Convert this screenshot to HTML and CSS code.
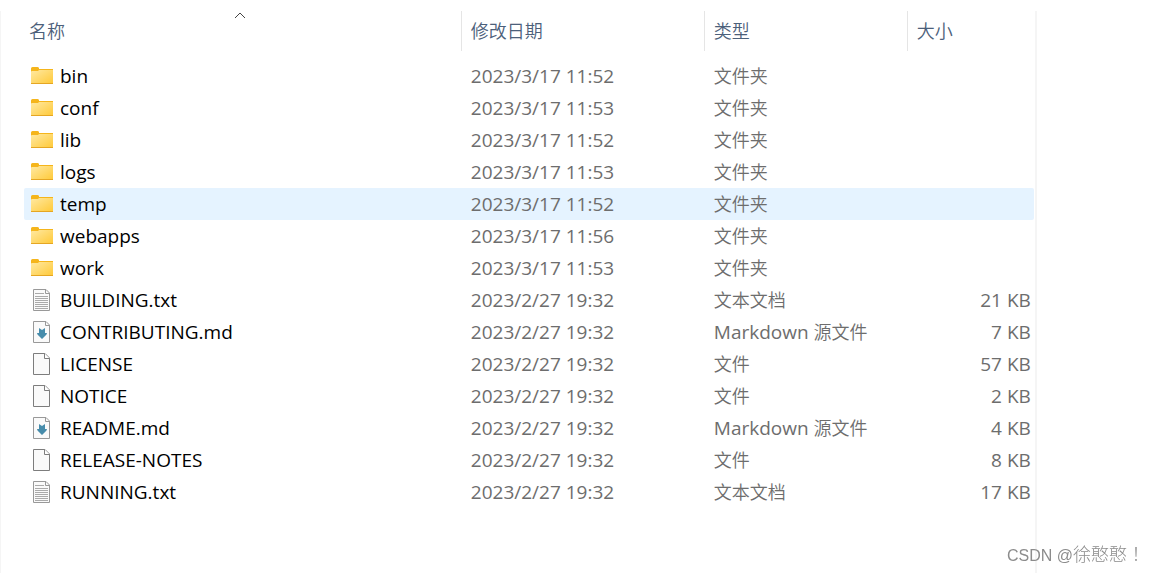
FILE: index.html
```html
<!DOCTYPE html>
<html lang="zh-CN">
<head>
  <meta charset="UTF-8" />
  <meta name="viewport" content="width=device-width, initial-scale=1.0" />
  <title>tomcat</title>
  <link rel="stylesheet" href="styles.css">
</head>
<body>
  <svg class="sprite" aria-hidden="true">
    <defs>
      <linearGradient id="amarillo" x1="0" y1="0" x2="1" y2="1">
        <stop offset="0" stop-color="#ffe9a2" />
        <stop offset="1" stop-color="#ffc937" />
      </linearGradient>
    </defs>
    <symbol id="folder" viewBox="0 0 24 24">
      <path d="M1 4.500Q1 3 2.500 3H7.500Q8.500 3 9 4V5H23V9H1z" fill="#f5b51b" />
      <path d="M1 8Q1 7 2 7H8L9 6H23V20H1z" fill="url(#amarillo)" />
      <path d="M1 19H23V20H1z" fill="#e5a623" />
    </symbol>
    <symbol id="file" viewBox="0 0 24 24">
      <path d="M3.500 1.500H15L19.500 6V22.500H3.500z" fill="#fafafa" stroke="#7d7d7d" />
      <path d="M14.500 1.500V6.500H19.500" fill="#fff" stroke="#7d7d7d" />
    </symbol>
    <symbol id="text" viewBox="0 0 24 24">
      <path d="M3.500 1.500H16L19.500 5V22.500H3.500z" fill="#fafafa" stroke="#999" />
      <path d="M15.500 1.500V5.500H19.500" fill="none" stroke="#999" />
      <path d="M5 5.500H14M5 8.500H18M5 10.500H18M5 12.500H18M5 14.500H18M5 16.500H18M5 18.500H18M5 20.500H18" stroke="#aaa" />
    </symbol>
    <symbol id="markdown" viewBox="0 0 24 24">
      <path d="M3.500 1.500H16L19.500 5V22.500H3.500z" fill="#fafafa" stroke="#999" />
      <path d="M15.500 1.500V5.500H19.500" fill="none" stroke="#999" />
      <path d="M9 8L12 10L15 8V13H17L16.500 14.500L12 19L7.500 14.500L7 13H9z" fill="#478cab" />
    </symbol>
  </svg>

  <main class="panel">
    <table class="files">
      <colgroup>
        <col>
        <col class="col-date">
        <col class="col-type">
        <col class="col-size">
      </colgroup>
      <thead>
        <tr>
          <th aria-sort="ascending">名称
            <svg class="sort" viewBox="0 0 12 7" aria-hidden="true"><path d="M1 6L6 1L11 6" fill="none" stroke="#444" /></svg>
          </th>
          <th>修改日期</th>
          <th>类型</th>
          <th>大小</th>
        </tr>
      </thead>
      <tbody>
        <tr>
          <td><a class="name" href="#bin"><svg class="icon"><use href="#folder" /></svg>bin</a></td>
          <td>2023/3/17 11:52</td><td class="type">文件夹</td><td></td>
        </tr>
        <tr>
          <td><a class="name" href="#conf"><svg class="icon"><use href="#folder" /></svg>conf</a></td>
          <td>2023/3/17 11:53</td><td class="type">文件夹</td><td></td>
        </tr>
        <tr>
          <td><a class="name" href="#lib"><svg class="icon"><use href="#folder" /></svg>lib</a></td>
          <td>2023/3/17 11:52</td><td class="type">文件夹</td><td></td>
        </tr>
        <tr>
          <td><a class="name" href="#logs"><svg class="icon"><use href="#folder" /></svg>logs</a></td>
          <td>2023/3/17 11:53</td><td class="type">文件夹</td><td></td>
        </tr>
        <tr class="active">
          <td><a class="name" href="#temp"><svg class="icon"><use href="#folder" /></svg>temp</a></td>
          <td>2023/3/17 11:52</td><td class="type">文件夹</td><td></td>
        </tr>
        <tr>
          <td><a class="name" href="#webapps"><svg class="icon"><use href="#folder" /></svg>webapps</a></td>
          <td>2023/3/17 11:56</td><td class="type">文件夹</td><td></td>
        </tr>
        <tr>
          <td><a class="name" href="#work"><svg class="icon"><use href="#folder" /></svg>work</a></td>
          <td>2023/3/17 11:53</td><td class="type">文件夹</td><td></td>
        </tr>
        <tr>
          <td><a class="name" href="#building"><svg class="icon"><use href="#text" /></svg>BUILDING.txt</a></td>
          <td>2023/2/27 19:32</td><td class="type">文本文档</td><td class="size">21 KB</td>
        </tr>
        <tr>
          <td><a class="name" href="#contributing"><svg class="icon"><use href="#markdown" /></svg>CONTRIBUTING.md</a></td>
          <td>2023/2/27 19:32</td><td class="type"><span class="latin">Markdown </span>源文件</td><td class="size">7 KB</td>
        </tr>
        <tr>
          <td><a class="name" href="#license"><svg class="icon"><use href="#file" /></svg>LICENSE</a></td>
          <td>2023/2/27 19:32</td><td class="type">文件</td><td class="size">57 KB</td>
        </tr>
        <tr>
          <td><a class="name" href="#notice"><svg class="icon"><use href="#file" /></svg>NOTICE</a></td>
          <td>2023/2/27 19:32</td><td class="type">文件</td><td class="size">2 KB</td>
        </tr>
        <tr>
          <td><a class="name" href="#readme"><svg class="icon"><use href="#markdown" /></svg>README.md</a></td>
          <td>2023/2/27 19:32</td><td class="type"><span class="latin">Markdown </span>源文件</td><td class="size">4 KB</td>
        </tr>
        <tr>
          <td><a class="name" href="#release-notes"><svg class="icon"><use href="#file" /></svg>RELEASE-NOTES</a></td>
          <td>2023/2/27 19:32</td><td class="type">文件</td><td class="size">8 KB</td>
        </tr>
        <tr>
          <td><a class="name" href="#running"><svg class="icon"><use href="#text" /></svg>RUNNING.txt</a></td>
          <td>2023/2/27 19:32</td><td class="type">文本文档</td><td class="size">17 KB</td>
        </tr>
      </tbody>
    </table>
  </main>

  <div class="watermark" lang="zh-TW"><span class="site">CSDN @</span>徐憨憨！</div>
</body>
</html>
```

FILE: styles.css
```css
body {
  font-family: "Open Sans", "Noto Sans CJK SC", sans-serif;
  font-size: 18px;
  margin: 0;
  padding-top: 11px;
  background: #fff;
  color: #6d6d6d;
}
.sprite {
  position: absolute;
  width: 0;
  height: 0;
}
.panel {
  box-sizing: border-box;
  width: 90%;
  min-height: calc(100vh - 11px);
  padding: 0 1px 0 23px;
  border-left: 1px solid #f5f5f5;
  border-right: 2px solid #f5f5f5;
}
.files {
  width: 100%;
  table-layout: fixed;
  border-spacing: 0;
}
.col-date {
  width: 243px;
}
.col-type {
  width: 203px;
}
.col-size {
  width: 127px;
}
th {
  position: relative;
  height: 40px;
  padding: 0 0 0 9px;
  border-left: 1px solid #e5e5e5;
  box-sizing: border-box;
  color: #4c607a;
  font-weight: 350;
  line-height: 24px;
  text-align: left;
}
th:first-child {
  padding-left: 5px;
  border-left: 0;
}
.sort {
  position: absolute;
  top: 1px;
  left: 210px;
  width: 12px;
  height: 7px;
}
/* gap between the header and the first row */
tbody::before {
  content: "";
  display: block;
  height: 9px;
}
td {
  height: 32px;
  padding: 0 0 0 10px;
  font-size: 19px;
  line-height: 32px;
  white-space: nowrap;
}
td:first-child {
  padding-left: 6px;
  border-radius: 2px 0 0 2px;
}
td:last-child {
  border-radius: 0 2px 2px 0;
}
td.type {
  font-size: 18px;
  font-weight: 350;
}
.latin {
  font-size: 19px;
  font-weight: 400;
}
td.size {
  padding-right: 3px;
  text-align: right;
}
.active td {
  background: #e5f3ff;
}
.name {
  display: flex;
  align-items: center;
  gap: 6px;
  color: #000;
  text-decoration: none;
}
.icon {
  width: 24px;
  height: 24px;
}
.watermark {
  position: fixed;
  right: 7px;
  bottom: 5px;
  color: #8c8c8c;
  font-family: "Liberation Sans", "Noto Sans CJK TC", sans-serif;
  font-size: 18px;
  font-weight: 300;
  line-height: 24px;
}
.site {
  font-size: 16px;
}
```
